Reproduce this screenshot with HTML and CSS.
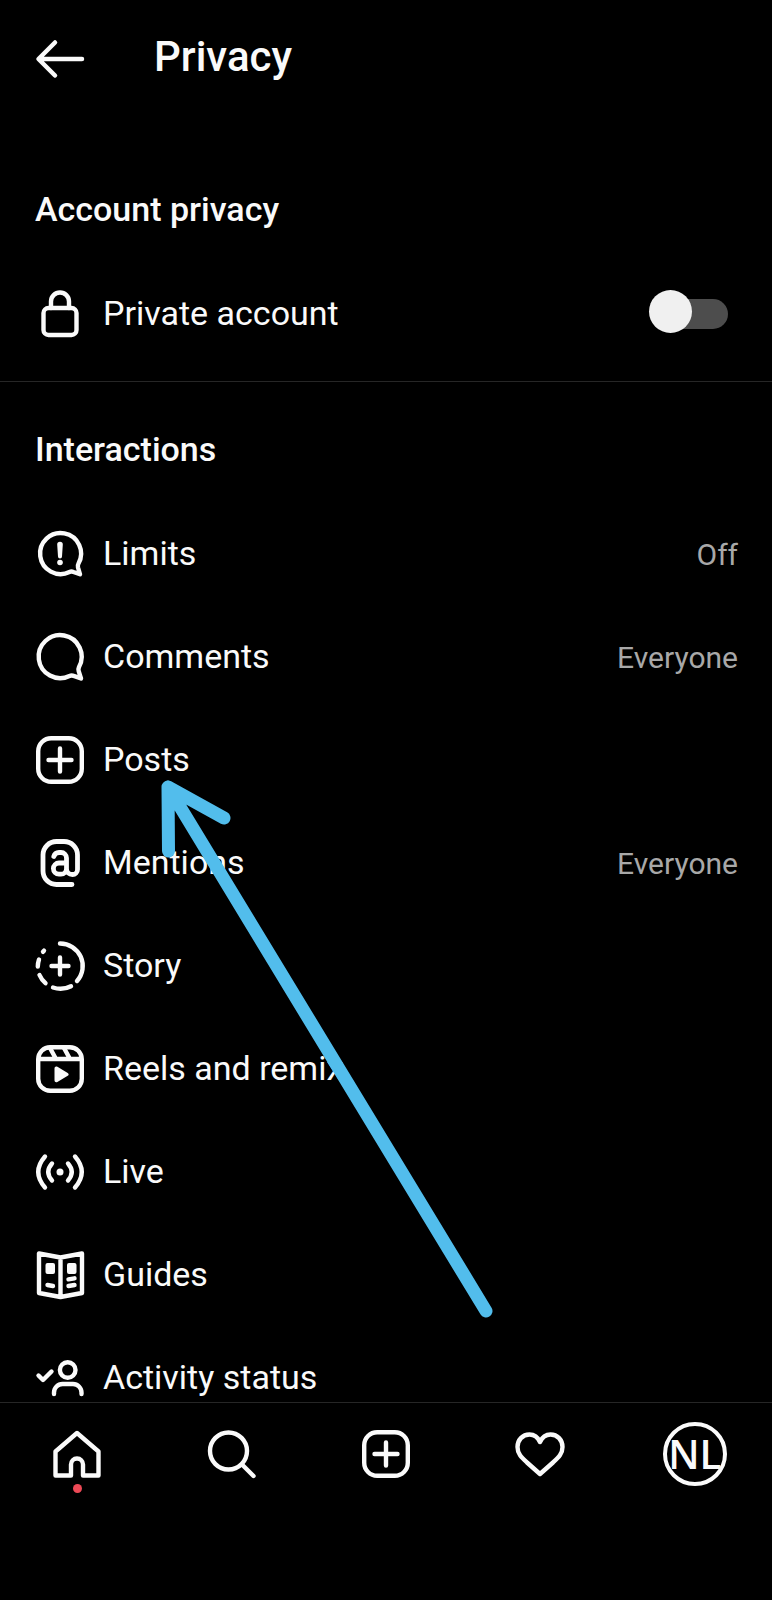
FILE: index.html
```html
<!DOCTYPE html>
<html lang="en">
<head>
  <meta charset="UTF-8" />
  <meta name="viewport" content="width=device-width, initial-scale=1" />
  <title>Privacy</title>
  <link rel="stylesheet" href="styles.css">
</head>
<body>

<header class="topbar">
  <button class="back" type="button" aria-label="Back">
    <svg class="icon" viewBox="0 0 48 48"><path d="M46 24H3M19 7.500L2.500 24L19 40.500" stroke-width="4.500" /></svg>
  </button>
  <h1>Privacy</h1>
</header>

<main class="settings">

  <section class="group">
    <h2>Account privacy</h2>
    <div class="row">
      <svg class="icon" viewBox="0 0 48 48"><rect x="7.500" y="18" width="33" height="27" rx="5" /><path d="M15 18V11.500a9 9 0 0 1 18 0V18" /></svg>
      <label class="name" for="private">Private account</label>
      <input class="switch" type="checkbox" id="private" />
    </div>
  </section>

  <section class="group">
    <h2>Interactions</h2>
    <a class="row" href="#limits">
      <svg class="icon" viewBox="0 0 48 48"><path d="M42.500 33.500a20.500 20.500 0 1 0-9 8.500c1.500-.7 2.500-.6 4 0l6.500 2.300-2-6.800c-.4-1.500-.3-2.600.5-4z" /><path class="solid" d="M21.200 14.500a2.800 2.800 0 0 1 5.600 0L26 26.500a2 2 0 0 1-4 0z" /><circle class="solid" cx="24" cy="32.500" r="2.800" /></svg>
      <span class="name">Limits</span>
      <span class="value">Off</span>
    </a>
    <a class="row" href="#comments">
      <svg class="icon" viewBox="0 0 48 48"><path d="M43 34a21.500 21.500 0 1 0-9.500 9c1.500-.7 2.700-.7 4.200-.1l7.300 2.600-2.300-7.300c-.5-1.600-.4-2.700.3-4.200z" /></svg>
      <span class="name">Comments</span>
      <span class="value">Everyone</span>
    </a>
    <a class="row" href="#posts">
      <svg class="icon" viewBox="0 0 48 48"><rect x="2.200" y="2.200" width="43.600" height="43.600" rx="13" /><path d="M24 12.500v23M12.500 24h23" /></svg>
      <span class="name">Posts</span>
    </a>
    <a class="row" href="#mentions">
      <svg class="icon" viewBox="0 0 48 48"><path d="M36 45.500H20.500A13.500 13.500 0 0 1 7 32V16A13.500 13.500 0 0 1 20.500 2.500H28A13.500 13.500 0 0 1 41.500 16V30.500a5 5 0 0 1-5 5c-3.500 0-6-2-6-5.500V19a5.500 5.500 0 0 0-5.500-5.500h-2a5.500 5.500 0 0 0-5.200 4M30.500 24H23a5.500 5.500 0 0 0 0 11.200h2a5.500 5.500 0 0 0 5.500-5.500" stroke-width="4.800" /></svg>
      <span class="name">Mentions</span>
      <span class="value">Everyone</span>
    </a>
    <a class="row" href="#story">
      <svg class="icon" viewBox="0 0 48 48"><path d="M24 1.500A22.500 22.500 0 0 1 41 39M35 44.200A23 23 0 0 1 17 45.500M9.500 41.200A22.500 22.500 0 0 1 3.500 33M1.800 24.500A22.500 22.500 0 0 1 3 17.500M7 9.800L8 8.700" /><path d="M24 15.500v17M15.500 24h17" /></svg>
      <span class="name">Story</span>
    </a>
    <a class="row" href="#reels">
      <svg class="icon" viewBox="0 0 48 48"><rect x="2.200" y="2.200" width="43.600" height="43.600" rx="12" /><path d="M3 14H45M14 3L20 14M28 3L34 14" /><path class="solid" d="M18.500 23.500c0-1.800 1.400-2.500 2.900-1.700l10.300 6.100c1.300.8 1.300 2 0 2.800l-10.300 6.200c-1.500.8-2.900 0-2.900-1.700z" /></svg>
      <span class="name">Reels and remix</span>
    </a>
    <a class="row" href="#live">
      <svg class="icon" viewBox="0 0 48 48"><path d="M9 8.500Q-4.500 24 9 39.500M39 8.500Q52.500 24 39 39.500M16 15.500Q8.500 24 16 32.500M32 15.500Q39.500 24 32 32.500" /><circle class="solid" cx="24" cy="24" r="3.500" /></svg>
      <span class="name">Live</span>
    </a>
    <a class="row" href="#guides">
      <svg class="icon" viewBox="0 0 48 48"><path d="M24.500 6.500L3 2.500V42L24.500 46L46 42V2.500ZM24.500 6.500V46" /><rect class="solid" x="9.500" y="12" width="9.500" height="11" rx="2" /><rect class="solid" x="31" y="12" width="9.500" height="11" rx="2" /><path d="M11.500 34L17 35M32.500 28.300L38.500 27.300M32.500 35L38.500 34" /></svg>
      <span class="name">Guides</span>
    </a>
    <a class="row" href="#activity">
      <svg class="icon" viewBox="0 0 48 48"><circle cx="31.700" cy="16" r="7.800" /><path d="M18 40V38.500a8.500 8.500 0 0 1 8.500-8.500H37a8.500 8.500 0 0 1 8.500 8.500V40M2.500 21.500L7 26L15.500 17.500" /></svg>
      <span class="name">Activity status</span>
    </a>
  </section>

</main>

<nav class="tabs">
  <a class="tab active" href="#home" aria-label="Home">
    <svg class="icon" viewBox="0 0 48 48"><path d="M18 45.500H2.500V21.500L24 3L45.500 21.500V45.500H30V34.500a6 6 0 0 0-12 0z" /></svg>
  </a>
  <a class="tab" href="#search" aria-label="Search">
    <svg class="icon" viewBox="0 0 48 48"><circle cx="20.500" cy="21" r="18.500" /><path d="M34 34.500L45.500 46" /></svg>
  </a>
  <a class="tab" href="#new" aria-label="New post">
    <svg class="icon" viewBox="0 0 48 48"><rect x="2.200" y="2.200" width="43.600" height="43.600" rx="13" /><path d="M24 12.500v23M12.500 24h23" /></svg>
  </a>
  <a class="tab" href="#likes" aria-label="Likes">
    <svg class="icon" viewBox="0 0 48 48"><path d="M24 12C21.500 6.500 17.500 4.500 13.500 4.500C6.500 4.500 1.500 10 1.500 17C1.500 24 5.500 27.500 11 32.500L24 44L37 32.500C42.500 27.500 46.500 24 46.500 17C46.500 10 41.500 4.500 34.500 4.500C30.500 4.500 26.500 6.500 24 12Z" /></svg>
  </a>
  <a class="tab" href="#profile"><span class="avatar">NL</span></a>
</nav>

<!-- Arrow pointing at Posts -->
<svg class="pointer" viewBox="0 0 332 538" aria-hidden="true">
  <path d="M7.500 71L7 7L63 38M7 7L325 531" />
</svg>

</body>
</html>
```

FILE: styles.css
```css
* { box-sizing: border-box; }
body {
  position: relative;
  display: flex;
  flex-direction: column;
  height: 100vh;
  margin: 0;
  overflow: hidden;
  background: #000;
  color: #fafafa;
  font-family: Roboto, sans-serif;
  font-size: 34px;
  line-height: 40px;
}
h1, h2 { margin: 0; font-weight: 500; }
h1 { padding-bottom: 4px; font-size: 42px; line-height: 50px; }
h2 { padding: 31px 35px 33px; font-size: 34px; line-height: 40px; }
a { color: inherit; text-decoration: none; }

.icon {
  flex: none;
  display: block;
  width: 48px;
  height: 48px;
  overflow: visible;
  fill: none;
  stroke: #fafafa;
  stroke-width: 4.400;
  stroke-linecap: round;
  stroke-linejoin: round;
}
.icon .solid { fill: #fafafa; stroke: none; }

.topbar {
  flex: none;
  display: flex;
  align-items: center;
  gap: 70px;
  height: 118px;
  padding: 0 36px;
}
.back { padding: 0; border: none; background: none; cursor: pointer; }

.settings { flex: 1; min-height: 0; overflow: hidden; padding-top: 40px; }
.group + .group { border-top: 1px solid #262626; padding-top: 16px; }
.group:first-child { padding-bottom: 16px; }
.row {
  display: flex;
  align-items: center;
  gap: 19px;
  height: 103px;
  padding: 0 34px 0 36px;
}
.name { padding-bottom: 2px; }
.value { margin-left: auto; padding-top: 2px; color: #a8a8a8; font-size: 30px; }

.switch {
  appearance: none;
  display: grid;
  align-items: center;
  width: 79px;
  height: 43px;
  margin: 0 10px 4px auto;
  cursor: pointer;
}
.switch::before, .switch::after { content: ""; grid-area: 1 / 1; }
.switch::before { height: 30px; margin: 4px 0 0 8px; border-radius: 15px; background: #4d4d4d; }
.switch::after { width: 43px; height: 43px; border-radius: 50%; background: #f0f0f0; }
.switch:checked::after { justify-self: end; }

.tabs {
  flex: none;
  display: grid;
  grid-template-columns: repeat(5, 1fr);
  align-items: start;
  height: 198px;
  border-top: 1px solid #262626;
}
.tab {
  position: relative;
  display: flex;
  align-items: center;
  justify-content: center;
  height: 102px;
}
.tab.active::after {
  content: "";
  position: absolute;
  bottom: 12px;
  width: 9px;
  height: 9px;
  border-radius: 50%;
  background: #ed4956;
}
.avatar {
  display: flex;
  align-items: center;
  justify-content: center;
  width: 64px;
  height: 64px;
  border: 4px solid #fafafa;
  border-radius: 50%;
  font-family: "Open Sans", sans-serif;
  font-size: 40px;
  font-weight: 600;
}

.pointer {
  position: absolute;
  top: 780px;
  left: 161px;
  width: 332px;
  height: 538px;
  overflow: visible;
  fill: none;
  stroke: #52bdec;
  stroke-width: 13;
  stroke-linecap: round;
  stroke-linejoin: round;
}
```
